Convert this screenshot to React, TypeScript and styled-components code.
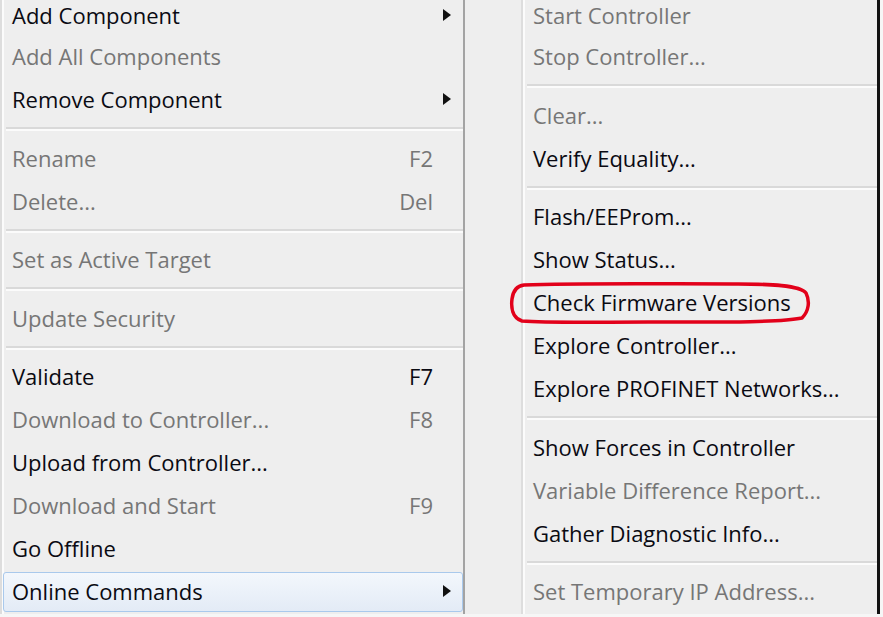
import React from 'react';
import styled, { createGlobalStyle } from 'styled-components';

const GlobalStyle = createGlobalStyle`
  html, body {
    margin: 0;
    padding: 0;
    background: #f6f6f6;
  }
  body {
    font-family: 'Open Sans', 'Noto Sans', 'DejaVu Sans', sans-serif;
  }
`;

const Screen = styled.div`
  display: flex;
  width: 883px;
  height: 617px;
  overflow: hidden;
  background: #f6f6f6;
`;

const Menu = styled.div<{ $width: number; $gutter: number }>`
  position: relative;
  flex: 0 0 auto;
  width: ${(p) => p.$width}px;
  height: 614px;
  background: #eeeeee;
  overflow: hidden;

  &::before {
    content: '';
    position: absolute;
    top: 0;
    bottom: 0;
    left: ${(p) => p.$gutter}px;
    width: 2px;
    background: #dddddd;
    box-shadow: 2px 0 0 #fbfbfb;
  }
`;

const LeftMenu = styled(Menu)`
  border-right: 2px solid #a3a3a3;
`;

const RightMenu = styled(Menu)`
  border-right: 3px solid #111111;
`;

const List = styled.div<{ $left: number }>`
  display: flex;
  flex-direction: column;
  padding-left: ${(p) => p.$left}px;
`;

// the first row is partly hidden above the top edge of the screenshot,
// so only its lower 34.5px are laid out
const Row = styled.div<{ $disabled?: boolean; $active?: boolean; $first?: boolean }>`
  position: relative;
  display: flex;
  align-items: ${(p) => (p.$first ? 'flex-end' : 'center')};
  height: ${(p) => (p.$first ? 28 : 43)}px;
  padding-bottom: ${(p) => (p.$first ? 6.5 : 0)}px;
  padding-left: 10px;
  padding-right: 12px;
  font-size: 22px;
  line-height: 26px;
  font-weight: ${(p) => (p.$disabled ? 400 : 500)};
  color: ${(p) => (p.$disabled ? '#767676' : '#0a0a12')};
  white-space: nowrap;

  ${(p) =>
    p.$active &&
    `
    &::before {
      content: '';
      position: absolute;
      left: 1px;
      right: 0;
      top: 2px;
      bottom: 1px;
      border: 1.5px solid #a9c9ec;
      border-radius: 3px;
      background: linear-gradient(#f3f7fc, #e3ebf6);
    }
  `}
`;

const Label = styled.span`
  position: relative;
  flex: 1 1 auto;
`;

const Shortcut = styled.span`
  position: relative;
  width: 60px;
  text-align: right;
`;

const ArrowSlot = styled.span`
  position: relative;
  display: flex;
  align-items: center;
  justify-content: flex-end;
  width: 18px;
  height: 26px;
`;

const Arrow = styled.span`
  width: 0;
  height: 0;
  border-top: 6.5px solid transparent;
  border-bottom: 6.5px solid transparent;
  border-left: 8px solid #111111;
`;

const Separator = styled.div<{ $left: number }>`
  display: flex;
  align-items: center;
  height: 15.5px;
  margin-left: ${(p) => p.$left}px;

  &::after {
    content: '';
    flex: 1 1 auto;
    height: 2px;
    background: #d9d9d9;
    box-shadow: 0 2px 0 #fbfbfb;
  }
`;

const Callout = styled.svg`
  position: absolute;
  left: 43px;
  top: 281px;
  width: 306px;
  height: 46px;
  pointer-events: none;
`;

type Entry =
  | { kind: 'sep' }
  | {
      kind: 'item';
      label: string;
      shortcut?: string;
      disabled?: boolean;
      sub?: boolean;
      active?: boolean;
    };

const item = (
  label: string,
  opts: { shortcut?: string; disabled?: boolean; sub?: boolean; active?: boolean } = {}
): Entry => ({ kind: 'item', label, ...opts });
const sep: Entry = { kind: 'sep' };

const leftEntries: Entry[] = [
  item('Add Component', { sub: true }),
  item('Add All Components', { disabled: true }),
  item('Remove Component', { sub: true }),
  sep,
  item('Rename', { shortcut: 'F2', disabled: true }),
  item('Delete...', { shortcut: 'Del', disabled: true }),
  sep,
  item('Set as Active Target', { disabled: true }),
  sep,
  item('Update Security', { disabled: true }),
  sep,
  item('Validate', { shortcut: 'F7' }),
  item('Download to Controller...', { shortcut: 'F8', disabled: true }),
  item('Upload from Controller...'),
  item('Download and Start', { shortcut: 'F9', disabled: true }),
  item('Go Offline'),
  item('Online Commands', { sub: true, active: true }),
];

const rightEntries: Entry[] = [
  item('Start Controller', { disabled: true }),
  item('Stop Controller...', { disabled: true }),
  sep,
  item('Clear...', { disabled: true }),
  item('Verify Equality...'),
  sep,
  item('Flash/EEProm...'),
  item('Show Status...'),
  item('Check Firmware Versions'),
  item('Explore Controller...'),
  item('Explore PROFINET Networks...'),
  sep,
  item('Show Forces in Controller'),
  item('Variable Difference Report...', { disabled: true }),
  item('Gather Diagnostic Info...'),
  sep,
  item('Set Temporary IP Address...', { disabled: true }),
];

interface MenuBodyProps {
  entries: Entry[];
  gutter: number;
  withShortcuts?: boolean;
}

const MenuBody = ({ entries, gutter, withShortcuts }: MenuBodyProps) => (
  <List $left={gutter}>
    {entries.map((e, i) =>
      e.kind === 'sep' ? (
        <Separator key={i} $left={4} />
      ) : (
        <Row key={i} $first={i === 0} $disabled={e.disabled} $active={e.active}>
          <Label>{e.label}</Label>
          {withShortcuts && <Shortcut>{e.shortcut}</Shortcut>}
          {withShortcuts && <ArrowSlot>{e.sub && <Arrow />}</ArrowSlot>}
        </Row>
      )
    )}
  </List>
);

export default function App() {
  return (
    <>
      <GlobalStyle />
      <Screen>
        <LeftMenu $width={463} $gutter={0}>
          <MenuBody entries={leftEntries} gutter={2} withShortcuts />
        </LeftMenu>
        <RightMenu $width={412} $gutter={56}>
          <MenuBody entries={rightEntries} gutter={58} />
          <Callout viewBox="0 0 306 46">
            <path
              d="M16 4 C70 2 150 3 230 3 C262 3 292 4 298 12 C302 20 301 30 294 37 C270 42 200 41 140 41 C90 41 40 42 14 40 C4 37 3 26 4 18 C5 10 8 5 16 4 Z"
              fill="none"
              stroke="#e2001a"
              strokeWidth="3.5"
            />
          </Callout>
        </RightMenu>
      </Screen>
    </>
  );
}
